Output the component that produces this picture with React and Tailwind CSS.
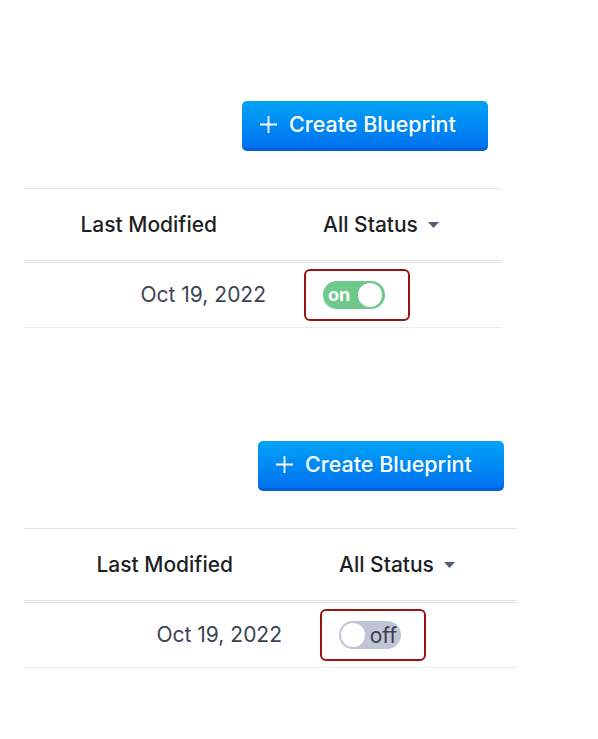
import React from "react";

function Toggle({ on }) {
  if (on) {
    return (
      <div className="flex h-[28px] w-[62px] items-center justify-between rounded-full bg-[#6fc98a] pl-[5px] pr-[3px]">
        <span className="text-[18px] font-bold leading-none text-white">on</span>
        <span className="h-[24px] w-[24px] rounded-full bg-white" />
      </div>
    );
  }
  return (
    <div className="flex h-[28px] w-[62px] items-center justify-between rounded-full bg-[#c0c5d6] pl-[2px] pr-[4px]">
      <span className="h-[24px] w-[24px] rounded-full bg-white" />
      <span className="text-[21px] leading-none text-[#3a3f4d]">off</span>
    </div>
  );
}

function Section({ on, width, col1 }) {
  return (
    <div className="h-[340px] pt-[101px] pl-[24px]">
      <div className={width}>
        <div className="flex justify-end pr-[13px]">
          <button className="flex h-[50px] w-[246px] items-center rounded-[5px] border-b-[3px] border-[#0062d2] bg-gradient-to-b from-[#03a3f7] to-[#0071ef] pl-[17px] text-white">
            <svg width="19" height="19" viewBox="0 0 19 19" className="mr-[11px]">
              <path d="M9.5 1v17M1 9.5h17" stroke="white" strokeWidth="1.8" fill="none" />
            </svg>
            <span className="text-[21.5px] font-medium">Create Blueprint</span>
          </button>
        </div>
        <div className="mt-[37px] border-t border-[#dde4ec]">
          <div className="flex h-[71px] items-center text-[21px] font-medium text-[#1e1f24]">
            <div className={`${col1} pr-[73px] text-right`}>Last Modified</div>
            <div className="flex items-center pl-[33px]">
              <span>All Status</span>
              <svg width="11" height="6" viewBox="0 0 11 6" className="ml-[10px]">
                <path d="M0 0h11L5.5 6z" fill="#4f5e73" />
              </svg>
            </div>
          </div>
          <div className="h-[3px] border-y border-[#dbe2ea]" />
          <div className="flex h-[65px] items-center border-b border-[#e9edf2]">
            <div className={`${col1} pr-[24px] text-right text-[21px] text-[#3b4354]`}>Oct 19, 2022</div>
            <div className="ml-[14px] flex h-[52px] w-[106px] items-center rounded-[6px] border-[2.5px] border-[#9a1212] pl-[17px]">
              <Toggle on={on} />
            </div>
          </div>
        </div>
      </div>
    </div>
  );
}

export default function App() {
  return (
    <div className="min-h-[739px] w-[598px] bg-white" style={{ fontFamily: "Inter, 'Noto Sans', sans-serif" }}>
      <Section on={true} width="w-[477px]" col1="w-[266px] shrink-0" />
      <Section on={false} width="w-[493px]" col1="w-[282px] shrink-0" />
    </div>
  );
}
